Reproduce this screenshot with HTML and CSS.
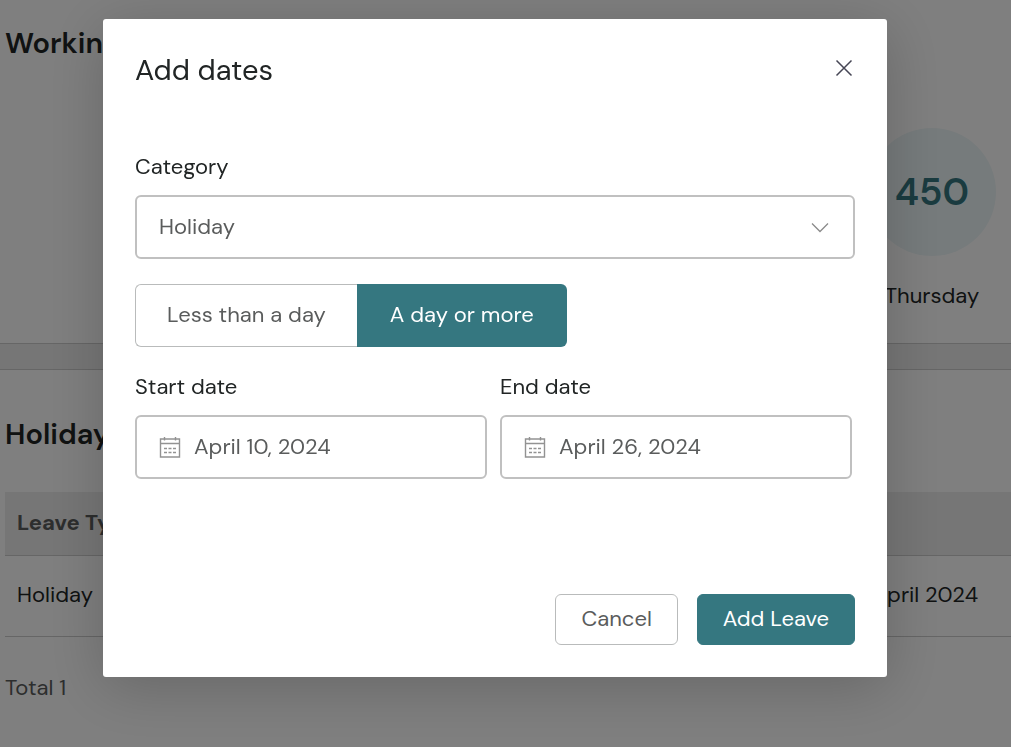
FILE: index.html
```
<!DOCTYPE html>
<html lang="en">
<head>
    <meta charset="UTF-8">
    <meta name="viewport" content="width=device-width, initial-scale=1.0">
    <title>Add dates</title>
    <link rel="stylesheet" href="styles.css">
</head>
<body>
    <main class="page">
        <section class="panel hours">
            <h2>Working</h2>
            <div class="days">
                <div class="day">
                    <div class="day-circle">450</div>
                    <div class="day-name">Thursday</div>
                </div>
            </div>
        </section>

        <section class="panel leaves">
            <h2>Holiday</h2>
            <table class="leave-table">
                <thead>
                    <tr>
                        <th>Leave Type</th>
                        <th></th>
                    </tr>
                </thead>
                <tbody>
                    <tr>
                        <td>Holiday</td>
                        <td class="date-cell">April 2024</td>
                    </tr>
                </tbody>
            </table>
            <p class="total">Total 1</p>
        </section>
    </main>

    <div class="overlay">
        <form class="modal" role="dialog" aria-labelledby="modalTitle">
            <div class="modal-header">
                <h1 id="modalTitle">Add dates</h1>
                <button type="button" class="close" aria-label="Close">
                    <svg width="18" height="18" viewBox="0 0 18 18" fill="none" stroke="#464655" stroke-width="1.5">
                        <path d="M1.5 1.5l15 15M16.5 1.5l-15 15"/>
                    </svg>
                </button>
            </div>

            <div class="modal-body">
                <div class="form-group">
                    <label for="category">Category</label>
                    <div class="select-wrap">
                        <select id="category" name="category">
                            <option>Holiday</option>
                        </select>
                        <svg class="chevron" width="18" height="11" viewBox="0 0 18 11" fill="none" stroke="#8a8a8a" stroke-width="1.3">
                            <path d="M1 1.5l8 8 8-8"/>
                        </svg>
                    </div>
                </div>

                <div class="toggle">
                    <button type="button">Less than a day</button>
                    <button type="button" class="active">A day or more</button>
                </div>

                <div class="date-row">
                    <div class="form-group">
                        <label for="startDate">Start date</label>
                        <div class="date-field">
                            <svg width="22" height="22" viewBox="0 0 22 22" fill="none" stroke="#929292" stroke-width="1.4">
                                <path d="M1.5 3h19v18h-19zM1.5 7.5h19M5.5 1v3.5M16.5 1v3.5"/>
                                <path d="M5 12.5h3M9.5 12.5h3M14 12.5h3M5 16.5h3M9.5 16.5h3M14 16.5h3"/>
                            </svg>
                            <input type="text" id="startDate" name="startDate" value="April 10, 2024">
                        </div>
                    </div>
                    <div class="form-group">
                        <label for="endDate">End date</label>
                        <div class="date-field">
                            <svg width="22" height="22" viewBox="0 0 22 22" fill="none" stroke="#929292" stroke-width="1.4">
                                <path d="M1.5 3h19v18h-19zM1.5 7.5h19M5.5 1v3.5M16.5 1v3.5"/>
                                <path d="M5 12.5h3M9.5 12.5h3M14 12.5h3M5 16.5h3M9.5 16.5h3M14 16.5h3"/>
                            </svg>
                            <input type="text" id="endDate" name="endDate" value="April 26, 2024">
                        </div>
                    </div>
                </div>
            </div>

            <div class="modal-footer">
                <button type="button" class="btn">Cancel</button>
                <button type="button" class="btn btn-primary">Add Leave</button>
            </div>
        </form>
    </div>
</body>
</html>
```
FILE: styles.css
```
* {
    box-sizing: border-box;
}

body {
    margin: 0;
    font-family: "DM Sans", Inter, sans-serif;
    font-size: 22px;
    line-height: 28px;
    color: #212525;
    background: #fff;
    overflow: hidden;
}

h1, h2, p {
    margin: 0;
}

h1, h2 {
    font-size: 29px;
    line-height: 36px;
}

h1 {
    font-weight: 400;
    line-height: 38px;
}

h2 {
    font-weight: 600;
}

input, select, button {
    font: inherit;
    color: #5a5c5c;
}

button {
    background: #fff;
    border: 1px solid #b9bbbb;
    border-radius: 6px;
    cursor: pointer;
}

.page {
    background: #ededed;
}

.panel {
    background: #fff;
    padding-left: 5px;
}

.hours {
    padding-top: 25px;
    padding-bottom: 33px;
    border-bottom: 1px solid #ccc;
}

.days {
    display: flex;
    justify-content: flex-end;
    padding: 67px 15px 0 0;
}

.day {
    text-align: center;
}

.day-circle {
    width: 128px;
    height: 128px;
    line-height: 128px;
    border-radius: 50%;
    background: #edf6f8;
    color: #357780;
    font-size: 38px;
    font-weight: 600;
}

.day-name {
    margin-top: 26px;
}

.leaves {
    margin-top: 25px;
    padding-top: 46px;
    min-height: 378px;
    border-top: 1px solid #ccc;
}

.leave-table {
    width: 100%;
    margin-top: 40px;
    border-collapse: collapse;
    text-align: left;
}

.leave-table th {
    height: 63px;
    padding: 0 12px;
    background: #ededed;
    color: #5a5c5c;
    font-weight: 700;
    border-bottom: 1px solid #ccc;
}

.leave-table td {
    height: 81px;
    padding: 0 12px 2px;
    border-bottom: 1px solid #ccc;
}

.leave-table .date-cell {
    padding-right: 33px;
    text-align: right;
}

.total {
    margin-top: 37px;
    color: #5a5c5c;
}

.overlay {
    position: fixed;
    inset: 0;
    padding: 19px 124px 70px 103px;
    background: rgba(0, 0, 0, 0.5);
}

.modal {
    padding: 32px;
    background: #fff;
    border-radius: 3px;
    box-shadow: 0 10px 60px rgba(0, 0, 0, 0.2);
}

.modal-header {
    display: flex;
    justify-content: space-between;
}

.close {
    align-self: flex-start;
    display: flex;
    margin-top: 6px;
    padding: 2px;
    border: none;
}

.modal-body {
    padding: 64px 0 115px;
}

label {
    display: block;
    margin-bottom: 14px;
}

.select-wrap {
    position: relative;
}

select, .date-field {
    width: 100%;
    height: 64px;
    padding: 0 22px 1px;
    border: 2px solid #c0c0c0;
    border-radius: 6px;
    background: #fff;
}

select {
    appearance: none;
}

.chevron {
    position: absolute;
    right: 26px;
    top: 27px;
    pointer-events: none;
}

.toggle {
    display: flex;
    margin: 25px 0 26px;
}

.toggle button {
    height: 63px;
    padding: 0 31px 1px;
    border-right: none;
    border-radius: 6px 0 0 6px;
}

.toggle .active {
    padding: 0 33px 1px;
    background: #357780;
    border: none;
    border-radius: 0 6px 6px 0;
    color: #fff;
}

.date-row {
    display: grid;
    grid-template-columns: minmax(0, 1fr) minmax(0, 1fr);
    gap: 13px;
    padding-right: 3px;
}

.date-field {
    display: flex;
    align-items: center;
    gap: 13px;
}

.date-field svg {
    flex: none;
}

.date-field input {
    flex: 1;
    min-width: 0;
    padding: 0;
    border: none;
    outline: none;
}

.modal-footer {
    display: flex;
    justify-content: flex-end;
    gap: 19px;
}

.btn {
    height: 51px;
    padding: 0 25px 2px;
}

.btn-primary {
    background: #357780;
    border-color: #357780;
    color: #fff;
}
```
